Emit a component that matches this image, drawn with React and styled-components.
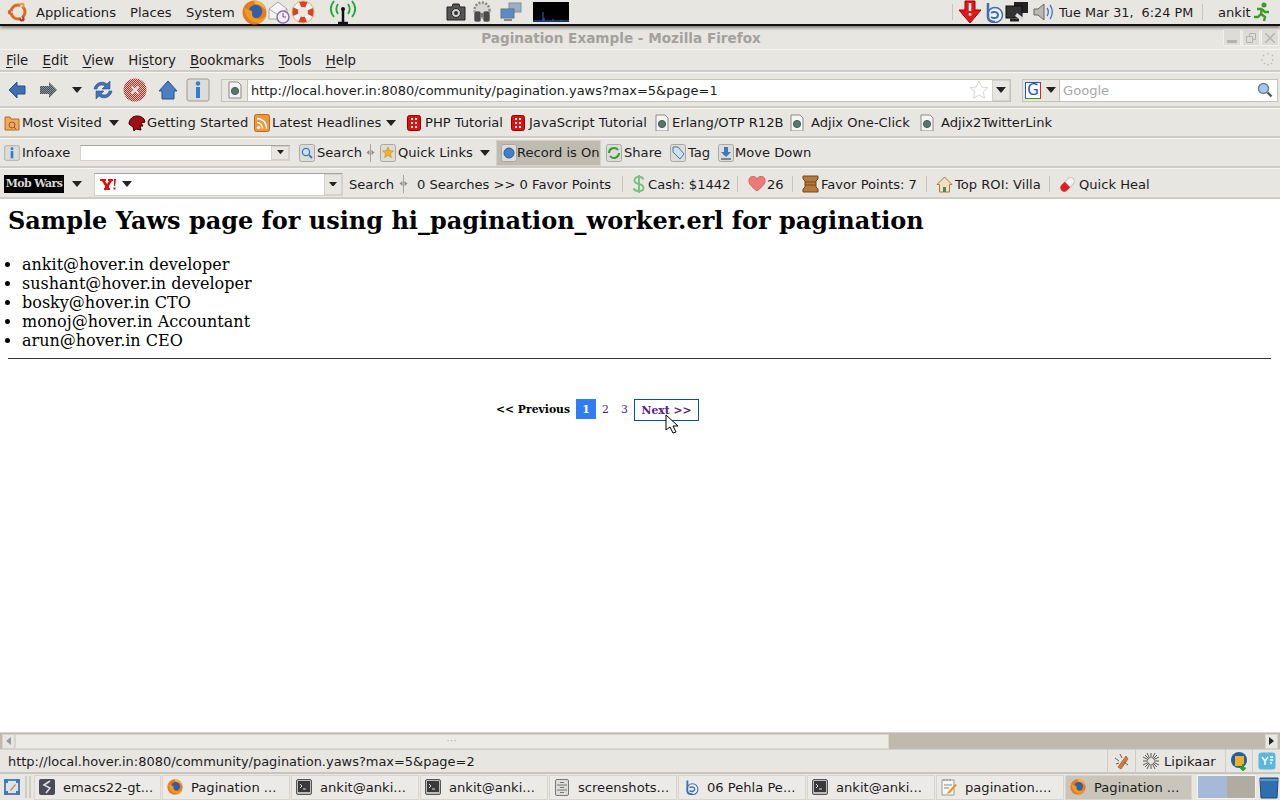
import styled, { createGlobalStyle } from "styled-components";

const GlobalStyle = createGlobalStyle`
  html, body {
    margin: 0;
    padding: 0;
    height: 100%;
    overflow: hidden;
    background: #e8e6e1;
  }
  #root {
    height: 800px;
  }
`;

const Screen = styled.div`
  width: 1280px;
  height: 800px;
  display: flex;
  flex-direction: column;
  overflow: hidden;
  background: #e8e6e1;
  color: #1c1c1c;
  font-family: "DejaVu Sans", sans-serif;
  font-size: 13.1px;
`;

const Row = styled.div`
  display: flex;
  align-items: center;
  flex: none;
  height: ${(p) => p.$h}px;
  padding-left: ${(p) => p.$pl || 0}px;
  padding-top: ${(p) => p.$pt || 0}px;
  box-sizing: border-box;
  white-space: nowrap;
`;

const Slot = styled.div`
  display: flex;
  align-items: center;
  flex: none;
  width: ${(p) => p.$w}px;
  gap: ${(p) => (p.$gap === undefined ? 2 : p.$gap)}px;
`;

const Grow = styled.div`
  flex: 1;
`;

const TopPanel = styled(Row)`
  background: #e8e6e1;
  border-bottom: 2px solid #111;
  box-shadow: 0 2px 3px rgba(0, 0, 0, 0.45);
  position: relative;
  z-index: 2;
`;

const Clock = styled(Slot)`
  font-size: 12.8px;
`;

const TitleBar = styled(Row)`
  justify-content: center;
  position: relative;
  padding-right: 38px;
  font-weight: bold;
  font-size: 13.6px;
  color: #a3a19b;
`;

const WindowButtons = styled.div`
  position: absolute;
  right: 1px;
  top: 3px;
  display: flex;
  gap: 1px;
`;

const WindowButton = styled.div`
  width: 18px;
  height: 17px;
  border: 1px solid #f2f1ed;
  box-sizing: border-box;
  display: flex;
  align-items: center;
  justify-content: center;
  background: #dedcd6;
`;

const Bar = styled(Row)`
  border-top: 1px solid #f7f6f3;
  border-bottom: 2px solid #cfccc5;
`;

const MenuItem = styled.span`
  margin-right: 14.2px;
  font-size: 13.33px;
  u {
    text-underline-offset: 2px;
  }
`;

const UrlBox = styled.div`
  width: 790px;
  height: 23px;
  display: flex;
  align-items: center;
  background: #fff;
  border: 1px solid #c5c2ba;
  box-sizing: border-box;
  flex: none;
`;

const IdentityBox = styled.div`
  width: 25px;
  height: 21px;
  flex: none;
  display: flex;
  align-items: center;
  justify-content: center;
  background: #e8e6e1;
  border-right: 1px solid #c5c2ba;
  margin-right: 3px;
`;

const UrlText = styled.span`
  flex: 1;
  font-size: 12.96px;
`;

const DropButton = styled.div`
  width: ${(p) => p.$w || 18}px;
  height: ${(p) => p.$h || 21}px;
  flex: none;
  background: #e8e6e1;
  border: 1px solid #d4d1ca;
  box-sizing: border-box;
  display: flex;
  align-items: center;
  justify-content: center;
`;

const SearchBox = styled.div`
  width: 256px;
  height: 23px;
  margin-left: 11px;
  display: flex;
  align-items: center;
  background: #fff;
  border: 1px solid #c5c2ba;
  box-sizing: border-box;
  flex: none;
`;

const EngineButton = styled.div`
  width: 37px;
  height: 21px;
  flex: none;
  display: flex;
  align-items: center;
  gap: 5px;
  padding-left: 2px;
  box-sizing: border-box;
  background: #e8e6e1;
  border-right: 1px solid #c5c2ba;
`;

const GoogleMark = styled.span`
  width: 16px;
  height: 17px;
  box-sizing: border-box;
  display: flex;
  align-items: center;
  justify-content: center;
  border: 1px solid;
  border-color: #2a55c8 #d22 #2a9a2a #2a55c8;
  background: #fff;
  color: #2a55c8;
  font-size: 15px;
  line-height: 1;
`;

const Placeholder = styled.span`
  flex: 1;
  padding-left: 3px;
  color: #a8a8a8;
`;

const Combo = styled.div`
  width: ${(p) => p.$w}px;
  height: ${(p) => p.$h}px;
  flex: none;
  display: flex;
  align-items: center;
  justify-content: space-between;
  background: #fff;
  box-sizing: border-box;
  border: 1px solid #d4d1ca;
  border-top-color: #a8a5a0;
`;

const ComboLead = styled.div`
  display: flex;
  align-items: center;
  gap: 5px;
  padding-left: 4px;
`;

const RecordButton = styled(Slot)`
  height: 26px;
  padding-left: 4px;
  box-sizing: border-box;
  background: #c0bbb0;
  gap: 0;
  border: 1px solid #d4d1ca;
`;

const MobLogo = styled.span`
  width: 60px;
  height: 18px;
  display: block;
  background: #000;
  color: #d8d8d8;
  font-family: "DejaVu Serif", serif;
  font-weight: bold;
  font-size: 11px;
  line-height: 18px;
  letter-spacing: -0.6px;
  text-align: center;
`;

const Divider = styled.div`
  width: 1px;
  height: 16px;
  background: #c8c5be;
`;

const Content = styled.main`
  flex: 1;
  min-height: 0;
  background: #fff;
  color: #000;
  font-family: "DejaVu Serif", serif;
  padding: 8px 8px 0;
  overflow: hidden;
`;

const Heading = styled.h1`
  margin: 0 0 20px;
  font-size: 23.97px;
  line-height: 28px;
  font-weight: bold;
  color: #000;
`;

const People = styled.ul`
  margin: 0;
  padding: 0 0 0 14px;
  font-size: 16px;
  line-height: 19px;
`;

const Rule = styled.hr`
  margin: 8px 1px 0 0;
  border: 0;
  border-top: 1px solid #333;
`;

const Pager = styled.nav`
  display: flex;
  align-items: flex-start;
  margin: 40px 0 0 488px;
  font-size: 10.8px;
  line-height: 21px;
  position: relative;
`;

const Prev = styled.b`
  margin-right: 6px;
`;

const PageNumber = styled.a`
  width: ${(p) => (p.$active ? 20 : 19)}px;
  height: 20px;
  display: block;
  text-align: center;
  color: ${(p) => (p.$active ? "#fff" : "#551a8b")};
  background: ${(p) => (p.$active ? "#2e7df2" : "transparent")};
  font-weight: ${(p) => (p.$active ? "bold" : "normal")};
`;

const NextLink = styled.a`
  width: 65px;
  height: 22px;
  box-sizing: border-box;
  border: 1px solid #0b4f9e;
  text-align: center;
  color: #551a8b;
  font-weight: bold;
  line-height: 21px;
`;

const Pointer = styled.svg`
  position: absolute;
  left: 169px;
  top: 15px;
`;

const ScrollBar = styled(Row)`
  background: #bfb9ae;
  padding: 0 2px;
  border-top: 1px solid #d4d1ca;
  border-bottom: 1px solid #d4d1ca;
`;

const ScrollButton = styled.div`
  width: 13px;
  height: 15px;
  flex: none;
  background: #e8e6e1;
  border: 1px solid #d4d1ca;
  box-sizing: border-box;
  display: flex;
  align-items: center;
  justify-content: center;
`;

const ScrollThumb = styled.div`
  width: 874px;
  height: 15px;
  flex: none;
  background: #ecebe6;
  border: 1px solid #d9d6cf;
  box-sizing: border-box;
  display: flex;
  align-items: center;
  justify-content: center;
  letter-spacing: 1px;
  font-size: 8px;
  color: #9a978f;
`;

const StatusBar = styled(Row)`
  border-bottom: 2px solid #c8c5be;
`;

const StatusText = styled.span`
  flex: 1;
  padding-left: 8px;
  font-size: 12.96px;
`;

const StatusCell = styled.div`
  width: ${(p) => p.$w}px;
  height: 22px;
  flex: none;
  display: flex;
  align-items: center;
  justify-content: ${(p) => (p.$center ? "center" : "flex-start")};
  gap: 5px;
  padding-left: ${(p) => (p.$center ? 0 : 7)}px;
  box-sizing: border-box;
  border-left: 1px solid #cfccc5;
`;

const TaskBar = styled(Row)`
  background: #e8e6e1;
`;

const TaskSep = styled.div`
  width: 2px;
  height: 22px;
  background: #cfccc5;
  margin-left: ${(p) => p.$ml}px;
  flex: none;
`;

const TaskButton = styled.div`
  width: ${(p) => p.$w}px;
  height: 25px;
  flex: none;
  margin-right: 1px;
  display: flex;
  align-items: center;
  gap: 8px;
  padding-left: 4px;
  box-sizing: border-box;
  overflow: hidden;
  border: 1px solid #d8d5ce;
  background: ${(p) => (p.$active ? "#c9c5ba" : "#eceae6")};
`;

const TaskIcon = styled.span`
  width: 16px;
  flex: none;
  display: flex;
  align-items: center;
  justify-content: center;
`;

const Workspaces = styled.div`
  display: flex;
  width: 59px;
  height: 24px;
  margin-left: 4px;
  flex: none;
  box-sizing: border-box;
  border: 1px solid #f4f3ef;
`;

const Workspace = styled.div`
  flex: 1;
  background: ${(p) => p.$color};
`;

/* ---- drawn icons ---- */

const Arrow = ({ size = 10 }) => (
  <svg width={size} height={size * 0.6} viewBox="0 0 10 6">
    <path d="M0 0h10L5 6z" fill="#222" />
  </svg>
);

const GripMark = () => (
  <svg width="9" height="18" viewBox="0 0 9 18">
    <path d="M4.5 0v18" stroke="#a8a5a0" />
    <path d="M3.5 6v5L.5 8.500zM5.500 6v5l3-2.500z" fill="#8a8a86" />
  </svg>
);

const Ubuntu = () => (
  <svg width="22" height="22" viewBox="0 0 22 22">
    <circle cx="11" cy="11" r="7" fill="none" stroke="#e0691f" strokeWidth="3" />
    <circle cx="3.5" cy="11" r="2.6" fill="#d8602a" />
    <circle cx="15" cy="4" r="2.6" fill="#f0a040" />
    <circle cx="15" cy="18" r="2.6" fill="#b83c1c" />
    <path d="M11 11L4 11M11 11L15 4M11 11L15 18" stroke="#e8e6e1" strokeWidth="1.5" />
  </svg>
);

const FirefoxIcon = ({ size = 25 }) => (
  <svg width={size} height={size} viewBox="0 0 24 24">
    <circle cx="12" cy="12" r="11.500" fill="#e87a1d" />
    <circle cx="13" cy="11" r="6.500" fill="#2f5fa8" />
    <path d="M2 7c1 9 6 15 14 15 3 0 6-2 7-7-2 3-6 4-9 3-4-1-5-4-4-7-2-1-5-2-8-4z" fill="#f09a22" />
    <path d="M12 .5c5 0 10 4 11 10-2-4-6-6.500-10-6.500-1 0-1-2-1-3.500z" fill="#f4b740" />
  </svg>
);

const MailClock = () => (
  <svg width="24" height="24" viewBox="0 0 24 24">
    <path d="M2 9L11 2l9 7v10H2z" fill="#f4f4f2" stroke="#a8a8a4" />
    <path d="M2 9l9 6 9-6" fill="none" stroke="#a8a8a4" />
    <circle cx="16" cy="17" r="6" fill="#f1eef2" stroke="#8a70a8" strokeWidth="1.500" />
    <path d="M16 13v4h3" fill="none" stroke="#6a5088" />
  </svg>
);

const LifeBuoy = () => (
  <svg width="24" height="24" viewBox="0 0 24 24">
    <circle cx="12" cy="12" r="8" fill="none" stroke="#f4f2ee" strokeWidth="6" />
    <circle cx="12" cy="12" r="8" fill="none" stroke="#d8412a" strokeWidth="6" strokeDasharray="6.500 6" strokeDashoffset="3" />
    <circle cx="12" cy="12" r="11" fill="none" stroke="#d8b070" strokeWidth="1" />
  </svg>
);

const Antenna = () => (
  <svg width="26" height="24" viewBox="0 0 26 24">
    <path d="M13 9v13M8 23h10" stroke="#111" strokeWidth="2.500" />
    <circle cx="13" cy="9" r="2" fill="#111" />
    <path d="M8 4c-2 3-2 7 0 10M18 4c2 3 2 7 0 10M4 1C0 6 0 12 4 17M22 1c4 5 4 11 0 16" fill="none" stroke="#1fa53a" strokeWidth="1.800" />
  </svg>
);

const Camera = () => (
  <svg width="20" height="18" viewBox="0 0 20 18">
    <path d="M1 4h5l1-3h6l1 3h5v13H1z" fill="#555" stroke="#222" />
    <circle cx="10" cy="10" r="4.500" fill="#cfcfcf" stroke="#222" />
    <circle cx="10" cy="10" r="2" fill="#333" />
  </svg>
);

const Binoculars = () => (
  <svg width="22" height="22" viewBox="0 0 22 22">
    <circle cx="11" cy="9" r="7.500" fill="#d8d6d0" stroke="#8a8884" strokeWidth="2.500" strokeDasharray="2 1.500" />
    <rect x="3" y="10" width="7" height="11" rx="2" fill="#4a4a4a" stroke="#e8e6e1" strokeWidth=".6" />
    <rect x="12" y="10" width="7" height="11" rx="2" fill="#4a4a4a" stroke="#e8e6e1" strokeWidth=".6" />
    <rect x="9.500" y="12" width="3" height="4" fill="#777" />
  </svg>
);

const NetworkPair = () => (
  <svg width="22" height="20" viewBox="0 0 22 20">
    <rect x="9" y="1" width="12" height="9" fill="#9ab0c8" stroke="#8a8f96" />
    <rect x="1" y="7" width="13" height="9" fill="#5a8ac8" stroke="#6a7078" />
    <path d="M4 18h8" stroke="#888" strokeWidth="2" />
  </svg>
);

const LoadGraph = () => (
  <svg width="36" height="20" viewBox="0 0 36 20">
    <rect width="36" height="20" fill="#000" />
    <path d="M0 19h36M10 19v-9M11 19v-3M20 19v-2M28 19v-1" stroke="#2a6ad8" />
  </svg>
);

const RedAlert = () => (
  <svg width="24" height="24" viewBox="0 0 24 24">
    <path d="M7 1h10v9h6L12 23 1 10h6z" fill="#e01818" stroke="#a00" />
    <path d="M12 3v8M12 13v2.500" stroke="#fff" strokeWidth="2.500" />
  </svg>
);

const BlueB = ({ size = 22 }) => (
  <svg width={size} height={size} viewBox="0 0 22 22">
    <circle cx="13" cy="14" r="7.500" fill="#eef2f7" stroke="#3f6db0" strokeWidth="1.500" />
    <path d="M6 2v14c0 3 3 5 7 5" fill="none" stroke="#3f6db0" strokeWidth="2.500" />
    <path d="M9 12c3-2 7-1 7 2s-4 4-7 2" fill="none" stroke="#3f6db0" strokeWidth="2" />
  </svg>
);

const Monitors = () => (
  <svg width="24" height="22" viewBox="0 0 24 22">
    <rect x="9" y="1" width="14" height="11" fill="#222" />
    <rect x="1" y="5" width="16" height="12" fill="#333" stroke="#111" />
    <path d="M5 19h9" stroke="#222" strokeWidth="3" />
    <path d="M12 12l8 6-3 2-7-5z" fill="#ddd" />
  </svg>
);

const Speaker = () => (
  <svg width="22" height="22" viewBox="0 0 22 22">
    <path d="M1 8h4l6-5v16l-6-5H1z" fill="#b8b8b4" stroke="#666" />
    <path d="M14 7c2 3 2 5 0 8M17 4c3 4 3 10 0 14" fill="none" stroke="#4a78b8" strokeWidth="1.400" />
  </svg>
);

const Runner = () => (
  <svg width="17" height="20" viewBox="0 0 17 20">
    <circle cx="11" cy="3" r="2.500" fill="#3d9a2a" />
    <path d="M9 6l-1 6 4 3-1 4M8 12l-3 3H1M9 7H4M9 7l3 3h4" fill="none" stroke="#3d9a2a" strokeWidth="2.400" />
  </svg>
);

const NavBack = () => (
  <svg width="18" height="18" viewBox="0 0 18 18">
    <path d="M1 9l8-8v4h8v8H9v4z" fill="#3f6fb0" stroke="#2a4f88" />
  </svg>
);

const NavForward = () => (
  <svg width="20" height="18" viewBox="0 0 20 18">
    <defs>
      <pattern id="fwd" width="2" height="2" patternUnits="userSpaceOnUse">
        <rect width="2" height="2" fill="#8a9098" />
        <rect width="1" height="1" fill="#4a5058" />
        <rect x="1" y="1" width="1" height="1" fill="#4a5058" />
      </pattern>
    </defs>
    <path d="M19 9l-8-8v4H2v8h9v4z" fill="url(#fwd)" />
  </svg>
);

const Reload = () => (
  <svg width="20" height="20" viewBox="0 0 20 20">
    <path d="M1 9C2 3 9 0 14 4l3-3v8h-8l3-3C9 4 5 5 4 9z" fill="#3f72b8" stroke="#2a4f88" strokeWidth=".6" />
    <path d="M19 11c-1 6-8 9-13 5l-3 3v-8h8l-3 3c3 2 7 1 8-3z" fill="#3f72b8" stroke="#2a4f88" strokeWidth=".6" />
  </svg>
);

const Stop = () => (
  <svg width="24" height="24" viewBox="0 0 24 24">
    <defs>
      <pattern id="stp" width="2" height="2" patternUnits="userSpaceOnUse">
        <rect width="2" height="2" fill="#d8c0bc" />
        <rect width="1" height="1" fill="#a8352e" />
        <rect x="1" y="1" width="1" height="1" fill="#a8352e" />
      </pattern>
    </defs>
    <circle cx="12" cy="12" r="11.500" fill="url(#stp)" />
    <path d="M8.500 8.500l7 7M15.500 8.500l-7 7" stroke="#e8e0dc" strokeWidth="2" />
  </svg>
);

const Home = () => (
  <svg width="20" height="20" viewBox="0 0 20 20">
    <path d="M10 1L1 11h3v8h12v-8h3z" fill="#4a80c0" stroke="#2a4f88" />
  </svg>
);

const InfoTile = ({ size = 24 }) => (
  <svg width={size} height={size} viewBox="0 0 24 24">
    <rect x="1" y="1" width="22" height="22" rx="2" fill="#dcdcd8" stroke="#9a9a96" />
    <rect x="10" y="9" width="4" height="11" fill="#2f7fd0" />
    <circle cx="12" cy="5.500" r="2.200" fill="#2f7fd0" />
  </svg>
);

const PageGlobe = ({ size = 14 }) => (
  <svg width={size} height={size * 1.25} viewBox="0 0 14 17.500">
    <path d="M1 1h9l3 3v13H1z" fill="#f4f4f2" stroke="#8a8a86" />
    <circle cx="7" cy="10" r="3.600" fill="#5a7a50" stroke="#3a5a88" />
  </svg>
);

const Star = () => (
  <svg width="20" height="20" viewBox="0 0 20 20">
    <path d="M10 1l2.700 6 6.300.6-4.800 4.200 1.500 6.400L10 15l-5.700 3.200 1.500-6.400L1 7.600 7.300 7z" fill="#fff" stroke="#d8d6d0" />
  </svg>
);

const Magnifier = ({ size = 16 }) => (
  <svg width={size} height={size} viewBox="0 0 16 16">
    <circle cx="6.500" cy="6.500" r="5" fill="#a8c8e8" stroke="#6a8098" strokeWidth="1.400" />
    <path d="M10.500 10.500l4 4" stroke="#555" strokeWidth="2.400" />
  </svg>
);

const BookmarkFolder = () => (
  <svg width="16" height="17" viewBox="0 0 16 17">
    <path d="M1 3h5l1 2h8v11H1z" fill="#f0a860" stroke="#b86a20" />
    <circle cx="8" cy="11" r="3" fill="none" stroke="#9a5a20" />
    <path d="M10 13l2 2" stroke="#9a5a20" />
  </svg>
);

const Dragon = () => (
  <svg width="18" height="16" viewBox="0 0 18 16">
    <path d="M1 9c0-5 4-8 8-8 3 0 5 1 7 3l1 3-4 1 2 3-3 0 1 4-5-1-2 2-1-4z" fill="#a01010" stroke="#300" />
  </svg>
);

const RssIcon = () => (
  <svg width="16" height="18" viewBox="0 0 16 18">
    <rect x=".5" y=".5" width="15" height="17" rx="2" fill="#f0963a" stroke="#b86a20" />
    <circle cx="4.500" cy="13.500" r="1.600" fill="#fff" />
    <path d="M3 8.500c3 0 5.500 2.500 5.500 6M3 4.500c5.500 0 9.500 4 9.500 10" fill="none" stroke="#fff" strokeWidth="1.600" />
  </svg>
);

const RedDice = () => (
  <svg width="14" height="16" viewBox="0 0 14 16">
    <rect x=".5" y=".5" width="13" height="15" rx="2" fill="#e01010" stroke="#900" />
    <path d="M4 3h2v2H4zM8 3h2v2H8zM4 7h2v2H4zM8 7h2v2H8zM4 11h2v2H4zM8 11h2v2H8z" fill="#fff" />
  </svg>
);

const ToolTile = ({ children }) => (
  <svg width="16" height="18" viewBox="0 0 16 18">
    <rect x=".5" y=".5" width="15" height="17" rx="2" fill="#dcdcd8" stroke="#a8a8a4" />
    {children}
  </svg>
);

const SearchTile = () => (
  <ToolTile>
    <circle cx="7" cy="8" r="3.600" fill="#cfe0f0" stroke="#3a78c0" strokeWidth="1.300" />
    <path d="M10 11l3 3" stroke="#3a78c0" strokeWidth="1.800" />
  </ToolTile>
);

const StarTile = () => (
  <ToolTile>
    <path d="M8 3l1.600 3.600 3.900.4-3 2.600.9 3.900L8 11.400l-3.400 2.100.9-3.900-3-2.600 3.900-.4z" fill="#f0b030" stroke="#c08010" strokeWidth=".5" />
  </ToolTile>
);

const RecordTile = () => (
  <ToolTile>
    <circle cx="8" cy="9" r="5" fill="#3f80c8" stroke="#2a5a98" />
  </ToolTile>
);

const ShareTile = () => (
  <ToolTile>
    <path d="M3 9a5 5 0 0 1 9-3M13 9a5 5 0 0 1-9 3" fill="none" stroke="#3a9a3a" strokeWidth="2" />
  </ToolTile>
);

const TagTile = () => (
  <ToolTile>
    <path d="M3 3h5l6 7-4 5-7-7z" fill="#cfe0f0" stroke="#4a78a8" />
  </ToolTile>
);

const MoveTile = () => (
  <ToolTile>
    <path d="M6 3h4v5h3l-5 5-5-5h3z" fill="#3a78c0" />
    <path d="M3 15h10" stroke="#667" strokeWidth="1.500" />
  </ToolTile>
);

const YahooMark = () => (
  <svg width="18" height="14" viewBox="0 0 18 14">
    <path d="M1 2h6v2H6l2 3 2-3H9V2h5v2h-1l-3 5v2h1v2H5v-2h1V9L3 4H1z" fill="#e01010" />
    <path d="M15 2h2l-1 7h-1zM14.500 10.500h2v2h-2z" fill="#e01010" />
  </svg>
);

const Dollar = () => (
  <svg width="14" height="18" viewBox="0 0 14 20">
    <path d="M12 5c-1-2-3-3-5-3S2 3 2 6c0 5 10 3 10 8 0 3-2 4-5 4s-5-1-6-3M7 0v20" fill="none" stroke="#7cc07e" strokeWidth="2.200" />
  </svg>
);

const Heart = () => (
  <svg width="18" height="16" viewBox="0 0 18 16">
    <path d="M9 15C3 10 1 8 1 5a4 4 0 0 1 8-1 4 4 0 0 1 8 1c0 3-2 5-8 10z" fill="#ec7a78" stroke="#d86060" />
  </svg>
);

const Chest = () => (
  <svg width="17" height="18" viewBox="0 0 17 18">
    <path d="M1 1h15v3l-2 2v6l2 2v3H1v-3l2-2V6L1 4z" fill="#b8793a" stroke="#704820" />
    <path d="M3 7h11M3 10h11" stroke="#704820" />
  </svg>
);

const House = () => (
  <svg width="17" height="17" viewBox="0 0 17 17">
    <path d="M8.500 1L1 8.500h2.500V16h10V8.500H16z" fill="#f0e0c0" stroke="#b07a3a" />
    <path d="M7 11h3v5H7z" fill="#4a8a4a" />
  </svg>
);

const Pill = () => (
  <svg width="16" height="16" viewBox="0 0 15 15">
    <path d="M1.500 8.500l6-6a3.500 3.500 0 0 1 5 5l-6 6a3.500 3.500 0 0 1-5-5z" fill="#f2f2f0" stroke="#c8c8c6" />
    <path d="M1.500 8.500l3-3 5 5-3 3a3.500 3.500 0 0 1-5-5z" fill="#e02020" />
  </svg>
);

const Bug = () => (
  <svg width="16" height="18" viewBox="0 0 16 18">
    <path d="M4 15L12 4l2 3-7 10z" fill="#d87a3a" stroke="#8a4a20" strokeWidth=".6" />
    <path d="M1 6l4 3M2 12l3-1M14 13l-4-3M6 2l2 4" stroke="#6a5a4a" />
  </svg>
);

const Burst = () => (
  <svg width="16" height="16" viewBox="0 0 16 16">
    <path d="M8 0v16M0 8h16M2 2l12 12M14 2L2 14M4 0l8 16M12 0L4 16M0 4l16 8M16 4L0 12" stroke="#333" strokeWidth=".8" />
    <circle cx="8" cy="8" r="3" fill="#e8e6e1" />
  </svg>
);

const UpdateGlobe = () => (
  <svg width="18" height="20" viewBox="0 0 18 20">
    <circle cx="9" cy="9" r="8" fill="#1f5fa8" />
    <rect x="5" y="5" width="9" height="10" fill="#f0b020" />
    <path d="M13 13v6M10.500 16.500L13 19l2.500-2.500" stroke="#2a9a2a" strokeWidth="2" fill="none" />
  </svg>
);

const YahooTile = () => (
  <svg width="18" height="18" viewBox="0 0 18 18">
    <rect x=".5" y=".5" width="17" height="17" rx="3" fill="#5ab8e0" />
    <path d="M4 5l3 4v4M10 5L7 9M12 5h3M12 8h3M12 11h2" stroke="#fff" strokeWidth="1.500" fill="none" />
  </svg>
);

const ShowDesktop = () => (
  <svg width="18" height="18" viewBox="0 0 18 18">
    <rect x="2" y="2" width="14" height="14" fill="#d8e4f0" stroke="#2f5f98" strokeWidth="1.500" />
    <path d="M1 1h4v4H1zM13 1h4v4h-4zM1 13h4v4H1zM13 13h4v4h-4z" fill="#3f78c0" />
    <path d="M7 12l5-6 1 1-5 6z" fill="#e08a20" />
  </svg>
);

const EmacsIcon = () => (
  <svg width="16" height="16" viewBox="0 0 16 16">
    <rect width="16" height="16" rx="2" fill="#4a4a58" />
    <path d="M11 2L5 6l6 3-4 5" fill="none" stroke="#ddd" strokeWidth="1.600" />
  </svg>
);

const TerminalIcon = () => (
  <svg width="16" height="16" viewBox="0 0 16 16">
    <rect x=".5" y=".5" width="15" height="15" rx="1.500" fill="#bcbcb8" stroke="#555" />
    <rect x="2" y="2" width="12" height="11" fill="#3a3a3a" />
    <path d="M4 5l2 2-2 2M7 10h3" stroke="#ddd" fill="none" />
  </svg>
);

const CabinetIcon = () => (
  <svg width="14" height="17" viewBox="0 0 14 17">
    <rect x=".5" y=".5" width="13" height="16" rx="1.500" fill="#dcdcd8" stroke="#777" />
    <path d="M2 6h10M2 11h10M5 3.500h4M5 8.500h4M5 13.500h4" stroke="#777" />
  </svg>
);

const NotepadIcon = () => (
  <svg width="16" height="18" viewBox="0 0 16 18">
    <rect x="1" y="2" width="12" height="15" fill="#f6f6f2" stroke="#999" />
    <path d="M3 1v2M6 1v2M9 1v2M3 7h8M3 10h5" stroke="#888" />
    <path d="M7 14l7-8 2 1-7 8-3 1z" fill="#e8961e" />
  </svg>
);

const TrashIcon = () => (
  <svg width="20" height="24" viewBox="0 0 20 24">
    <path d="M1 3h18v2l-1 18H2L1 5z" fill="#2f6fb0" stroke="#1a4a80" />
    <path d="M1 5h18" stroke="#8ab8e0" />
  </svg>
);

const Cursor = () => (
  <Pointer width="14" height="20" viewBox="0 0 14 20">
    <path d="M1 1v15l4-3 3 6 3-1-3-6h5z" fill="#fff" stroke="#000" />
  </Pointer>
);

const menus = [
  ["", "F", "ile"],
  ["", "E", "dit"],
  ["", "V", "iew"],
  ["Hi", "s", "tory"],
  ["", "B", "ookmarks"],
  ["", "T", "ools"],
  ["", "H", "elp"],
];

const people = [
  "ankit@hover.in developer",
  "sushant@hover.in developer",
  "bosky@hover.in CTO",
  "monoj@hover.in Accountant",
  "arun@hover.in CEO",
];

const tasks = [
  [<EmacsIcon key="i" />, "emacs22-gt...", 127],
  [<FirefoxIcon key="i" size={16} />, "Pagination ...", 128],
  [<TerminalIcon key="i" />, "ankit@anki...", 128],
  [<TerminalIcon key="i" />, "ankit@anki...", 128],
  [<CabinetIcon key="i" />, "screenshots...", 128],
  [<BlueB key="i" size={16} />, "06 Pehla Pe...", 128],
  [<TerminalIcon key="i" />, "ankit@anki...", 128],
  [<NotepadIcon key="i" />, "pagination....", 128],
  [<FirefoxIcon key="i" size={16} />, "Pagination ...", 127],
];

export default function App() {
  return (
    <Screen>
      <GlobalStyle />

      <TopPanel $h={26} $pl={7}>
        <Slot $w={29}><Ubuntu /></Slot>
        <Slot $w={94}>Applications</Slot>
        <Slot $w={56}>Places</Slot>
        <Slot $w={56}>System</Slot>
        <Slot $w={25}><FirefoxIcon /></Slot>
        <Slot $w={24}><MailClock /></Slot>
        <Slot $w={39}><LifeBuoy /></Slot>
        <Slot $w={116}><Antenna /></Slot>
        <Slot $w={25}><Camera /></Slot>
        <Slot $w={29}><Binoculars /></Slot>
        <Slot $w={33}><NetworkPair /></Slot>
        <LoadGraph />
        <Slot $w={383} />
        <Divider />
        <Slot $w={5} />
        <Slot $w={24}><RedAlert /></Slot>
        <Slot $w={23}><BlueB /></Slot>
        <Slot $w={28}><Monitors /></Slot>
        <Slot $w={26}><Speaker /></Slot>
        <Clock $w={143}>Tue Mar 31,&nbsp; 6:24 PM</Clock>
        <Divider />
        <Slot $w={15} />
        <Slot $w={35}>ankit</Slot>
        <Runner />
      </TopPanel>

      <TitleBar $h={23}>
        Pagination Example - Mozilla Firefox
        <WindowButtons>
          <WindowButton>
            <svg width="10" height="10"><path d="M0 8.500h10" stroke="#b5b3ad" strokeWidth="3" /></svg>
          </WindowButton>
          <WindowButton>
            <svg width="10" height="10"><path d="M.5 3.500h6v6h-6zM3.500 3V.5h6v6H7" fill="none" stroke="#b5b3ad" /></svg>
          </WindowButton>
          <WindowButton>
            <svg width="10" height="10"><path d="M0 0l10 10M10 0L0 10" stroke="#b5b3ad" strokeWidth="1.500" /></svg>
          </WindowButton>
        </WindowButtons>
      </TitleBar>

      <Bar $h={23} $pl={6}>
        {menus.map(([before, under, rest]) => (
          <MenuItem key={under + rest}>
            {before}
            <u>{under}</u>
            {rest}
          </MenuItem>
        ))}
        <Grow />
        <Slot $w={20}>
          <svg width="16" height="16" viewBox="0 0 16 16">
            <path d="M8 1v3M8 12v3M1 8h3M12 8h3M3 3l2 2M11 11l2 2M13 3l-2 2M5 11l-2 2" stroke="#bcbab4" strokeWidth="1.500" strokeDasharray="1.500 1.500" />
          </svg>
        </Slot>
      </Bar>

      <Bar $h={36} $pl={8} $pt={1}>
        <Slot $w={30}><NavBack /></Slot>
        <Slot $w={34}><NavForward /></Slot>
        <Slot $w={21}><Arrow /></Slot>
        <Slot $w={30}><Reload /></Slot>
        <Slot $w={35}><Stop /></Slot>
        <Slot $w={28}><Home /></Slot>
        <Slot $w={35}><InfoTile /></Slot>
        <UrlBox>
          <IdentityBox><PageGlobe /></IdentityBox>
          <UrlText>http://local.hover.in:8080/community/pagination.yaws?max=5&amp;page=1</UrlText>
          <Star />
          <Slot $w={3} />
          <DropButton><Arrow /></DropButton>
        </UrlBox>
        <SearchBox>
          <EngineButton>
            <GoogleMark>G</GoogleMark>
            <Arrow />
          </EngineButton>
          <Placeholder>Google</Placeholder>
          <Magnifier />
          <Slot $w={4} />
        </SearchBox>
      </Bar>

      <Bar $h={30} $pl={4}>
        <Slot $w={124}>
          <BookmarkFolder />
          Most Visited
          <Slot $w={3} />
          <Arrow />
        </Slot>
        <Slot $w={126} $gap={1}><Dragon />Getting Started</Slot>
        <Slot $w={153}>
          <RssIcon />
          Latest Headlines
          <Slot $w={1} />
          <Arrow />
        </Slot>
        <Slot $w={104} $gap={4}><RedDice />PHP Tutorial</Slot>
        <Slot $w={144} $gap={4}><RedDice />JavaScript Tutorial</Slot>
        <Slot $w={135} $gap={3}><PageGlobe />Erlang/OTP R12B</Slot>
        <Slot $w={130} $gap={7}><PageGlobe />Adjix One-Click</Slot>
        <Slot $w={200} $gap={7}><PageGlobe />Adjix2TwitterLink</Slot>
      </Bar>

      <Bar $h={30} $pl={4}>
        <Slot $w={76}><InfoTile size={16} />Infoaxe</Slot>
        <Slot $w={219}>
          <Combo $w={210} $h={16}>
            <span />
            <DropButton $h={14}><Arrow size={7} /></DropButton>
          </Combo>
        </Slot>
        <Slot $w={67}><SearchTile />Search</Slot>
        <Slot $w={14}><GripMark /></Slot>
        <Slot $w={116}>
          <StarTile />
          Quick Links
          <Slot $w={3} />
          <Arrow />
        </Slot>
        <RecordButton $w={105}>
          <RecordTile />
          Record is On
        </RecordButton>
        <Slot $w={5} />
        <Slot $w={64}><ShareTile />Share</Slot>
        <Slot $w={48}><TagTile />Tag</Slot>
        <Slot $w={100} $gap={1}><MoveTile />Move Down</Slot>
      </Bar>

      <Bar $h={31} $pl={4} $pt={2}>
        <Slot $w={68}><MobLogo>Mob Wars</MobLogo></Slot>
        <Slot $w={22}><Arrow /></Slot>
        <Slot $w={255}>
          <Combo $w={249} $h={23}>
            <ComboLead>
              <YahooMark />
              <Arrow />
            </ComboLead>
            <DropButton $h={21}><Arrow size={8} /></DropButton>
          </Combo>
        </Slot>
        <Slot $w={50}>Search</Slot>
        <Slot $w={18}><GripMark /></Slot>
        <Slot $w={205}>0 Searches &gt;&gt; 0 Favor Points</Slot>
        <Slot $w={10}><Divider /></Slot>
        <Slot $w={105}><Dollar />Cash: $1442</Slot>
        <Slot $w={11}><Divider /></Slot>
        <Slot $w={44} $gap={1}><Heart />26</Slot>
        <Slot $w={10}><Divider /></Slot>
        <Slot $w={124}><Chest />Favor Points: 7</Slot>
        <Slot $w={10}><Divider /></Slot>
        <Slot $w={113}><House />Top ROI: Villa</Slot>
        <Slot $w={11}><Divider /></Slot>
        <Slot $w={90} $gap={3}><Pill />Quick Heal</Slot>
      </Bar>

      <Content>
        <Heading>Sample Yaws page for using hi_pagination_worker.erl for pagination</Heading>
        <People>
          {people.map((person) => (
            <li key={person}>{person}</li>
          ))}
        </People>
        <Rule />
        <Pager>
          <Prev>&lt;&lt; Previous</Prev>
          <PageNumber $active>1</PageNumber>
          <PageNumber>2</PageNumber>
          <PageNumber>3</PageNumber>
          <NextLink>Next &gt;&gt;</NextLink>
          <Cursor />
        </Pager>
      </Content>

      <ScrollBar $h={18}>
        <ScrollButton>
          <svg width="5" height="8"><path d="M5 0v8L0 4z" fill="#999" /></svg>
        </ScrollButton>
        <ScrollThumb>···</ScrollThumb>
        <Grow />
        <ScrollButton>
          <svg width="5" height="8"><path d="M0 0v8l5-4z" fill="#222" /></svg>
        </ScrollButton>
      </ScrollBar>

      <StatusBar $h={24}>
        <StatusText>http://local.hover.in:8080/community/pagination.yaws?max=5&amp;page=2</StatusText>
        <StatusCell $w={28} $center><Bug /></StatusCell>
        <StatusCell $w={90}><Burst />Lipikaar</StatusCell>
        <StatusCell $w={27} $center><UpdateGlobe /></StatusCell>
        <StatusCell $w={28} $center><YahooTile /></StatusCell>
      </StatusBar>

      <TaskBar $h={26} $pl={3}>
        <ShowDesktop />
        <TaskSep $ml={4} />
        <TaskSep $ml={2} />
        <Slot $w={3} />
        {tasks.map(([icon, label, w], i) => (
          <TaskButton key={i} $w={w} $active={i === tasks.length - 1}>
            <TaskIcon>{icon}</TaskIcon>
            {label}
          </TaskButton>
        ))}
        <Workspaces>
          <Workspace $color="#a6bad8" />
          <Workspace $color="#b0aca1" />
        </Workspaces>
        <Slot $w={3} />
        <TrashIcon />
      </TaskBar>
    </Screen>
  );
}
